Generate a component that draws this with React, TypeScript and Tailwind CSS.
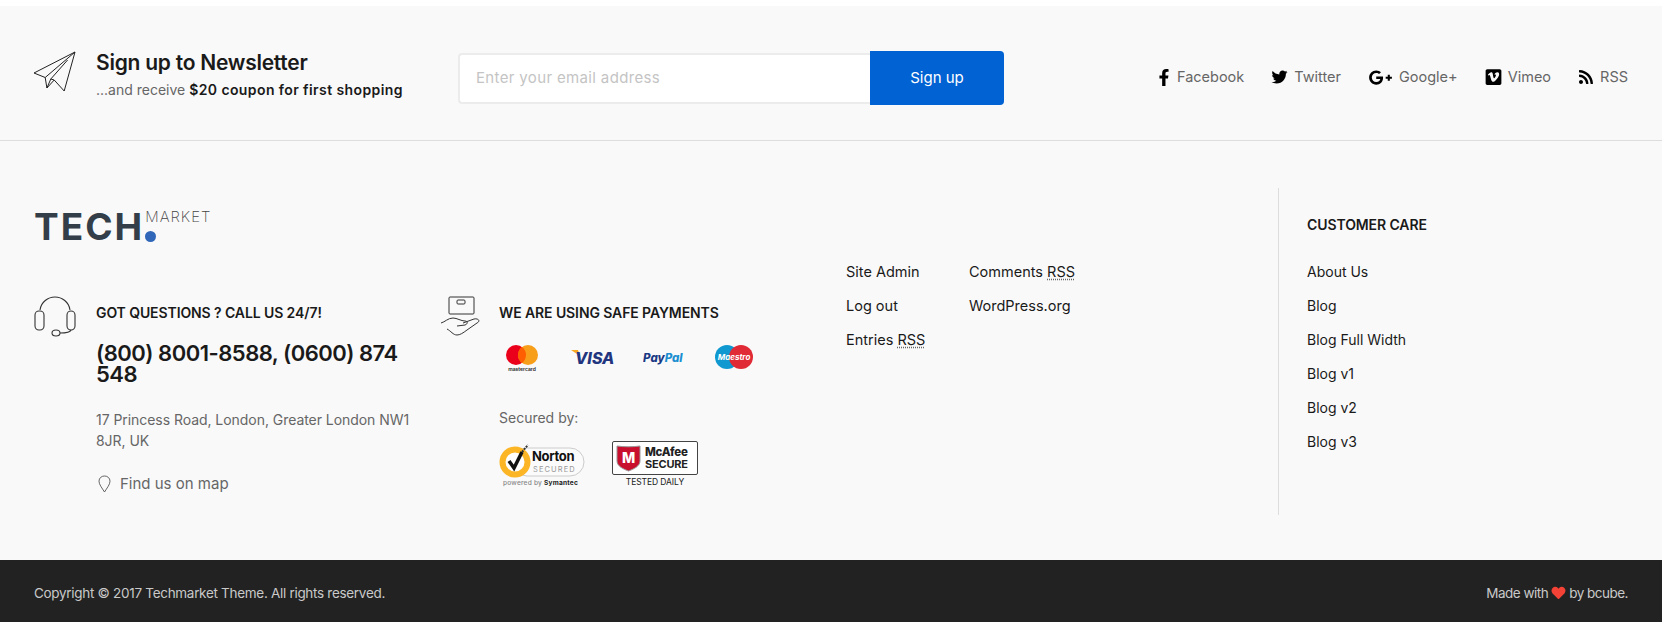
import { FaFacebookF, FaTwitter, FaGooglePlusG, FaVimeoSquare, FaRss, FaHeart } from "react-icons/fa";

const socials = [
  { icon: <FaFacebookF className="w-[14px] h-[17px]" />, label: "Facebook" },
  { icon: <FaTwitter className="w-[17px] h-[16px]" />, label: "Twitter" },
  { icon: <FaGooglePlusG className="w-[25px] h-[19px]" />, label: "Google+" },
  { icon: <FaVimeoSquare className="w-[17px] h-[18px]" />, label: "Vimeo" },
  { icon: <FaRss className="w-[16px] h-[16px]" />, label: "RSS" },
];

const careLinks = ["About Us", "Blog", "Blog Full Width", "Blog v1", "Blog v2", "Blog v3"];

function PlaneIcon() {
  return (
    <svg viewBox="33 51 43 42" className="w-[43px] h-[42px] shrink-0 -ml-[1px] -mt-[2px]" fill="none" stroke="#222" strokeWidth="1" strokeLinejoin="round">
      <path d="M75 52 34 73l11.200 4.500L46.900 88l7.300-8 10 11z" />
      <path d="M75 52 45.200 77.500M67.600 60 50.800 79l3.400 1M46.900 88l3.900-9" />
    </svg>
  );
}

function HeadsetIcon() {
  return (
    <svg viewBox="34 296 42 44" className="w-[42px] h-[44px] shrink-0" fill="none" stroke="#333" strokeWidth="1.100">
      <path d="M40 310c1-8 8-13 15-13s14 5 15 13" />
      <rect x="35" y="311" width="9" height="19" rx="4" />
      <rect x="67" y="311" width="8" height="19" rx="4" />
      <path d="M71 330c-1 3-6 3-11 3" />
      <ellipse cx="56" cy="333" rx="4" ry="3" />
    </svg>
  );
}

function HandBoxIcon() {
  return (
    <svg viewBox="440 296 41 41" className="w-[41px] h-[41px] shrink-0" fill="none" stroke="#333" strokeWidth="1">
      <rect x="449" y="297" width="25" height="17" rx="1" />
      <rect x="457" y="300" width="8" height="4" rx="1" />
      <path d="M441 323c4-1 7-5 12-5 4 0 8 3 12 3 3 0 3 3 0 4l-8 1" />
      <path d="M463 323l11-4c4-1 7 2 3 4l-10 7c-4 3-7 5-10 5-4 0-6-4-10-6" />
    </svg>
  );
}

function PinIcon() {
  return (
    <svg viewBox="0 0 13 18" className="w-[13px] h-[18px] shrink-0" fill="none" stroke="#555" strokeWidth="0.900">
      <path d="M6.500 17C4 13 1 9.500 1 6.200 1 3 3.500 1 6.500 1S12 3 12 6.200C12 9.500 9 13 6.500 17Z" />
    </svg>
  );
}

function Mastercard() {
  return (
    <svg viewBox="0 0 34 28" className="w-[34px] h-[28px]">
      <circle cx="11" cy="10" r="10" fill="#eb001b" />
      <circle cx="23" cy="10" r="10" fill="#f79e1b" />
      <path d="M17 2a10 10 0 0 1 0 16 10 10 0 0 1 0-16z" fill="#ff5f00" />
      <text x="17" y="26" textAnchor="middle" fontSize="5" fontWeight="600" fill="#222">mastercard</text>
    </svg>
  );
}

function Visa() {
  return (
    <svg viewBox="0 0 44 24" className="w-[44px] h-[24px]">
      <path d="M0 5h7l2 6z" fill="#f7a823" />
      <text x="4" y="19" fontSize="16" fontWeight="800" fontStyle="italic" fill="#22357f">VISA</text>
    </svg>
  );
}

function Paypal() {
  return (
    <svg viewBox="0 0 42 20" className="w-[42px] h-[20px]">
      <text x="0" y="15" fontSize="11.500" fontWeight="800" fontStyle="italic" fill="#1a3a85">Pay<tspan fill="#1b8fd0">Pal</tspan></text>
    </svg>
  );
}

function Maestro() {
  return (
    <svg viewBox="0 0 38 24" className="w-[38px] h-[24px]">
      <circle cx="12" cy="12" r="12" fill="#0f99d0" />
      <circle cx="26" cy="12" r="12" fill="#e02a35" />
      <text x="19" y="15" textAnchor="middle" fontSize="8" fontWeight="700" fontStyle="italic" fill="#fff">Maestro</text>
    </svg>
  );
}

function Norton() {
  return (
    <svg viewBox="0 0 87 46" className="w-[87px] h-[46px]">
      <rect x="14" y="7" width="71" height="28" rx="14" fill="#fbfbfb" stroke="#ccc" strokeWidth="1" />
      <circle cx="16" cy="21" r="15.500" fill="#fbb525" />
      <circle cx="16" cy="21" r="9.500" fill="#fff" />
      <path d="M10 20l5 7 8-16" fill="none" stroke="#111" strokeWidth="3.500" />
      <path d="M23 11l6-7" stroke="#333" strokeWidth="2" strokeDasharray="2 1" />
      <text x="33" y="20" fontSize="13" fontWeight="700" letterSpacing="-0.300" fill="#111">Norton</text>
      <text x="34" y="30.500" fontSize="7.500" letterSpacing="1.100" fill="#999">SECURED</text>
      <text x="4" y="44" fontSize="6.600" fontWeight="500" letterSpacing="0.200" fill="#888">powered by <tspan fill="#222" fontWeight="700">Symantec</tspan></text>
    </svg>
  );
}

function McAfee() {
  return (
    <svg viewBox="0 0 87 46" className="w-[87px] h-[46px]">
      <rect x="0.500" y="0.500" width="85" height="33" rx="1.500" fill="#fff" stroke="#444" />
      <path d="M5 5c7 1 16 1 23 0v15c0 5-6 8-11.500 10C11 28 5 25 5 20z" fill="#c8102e" stroke="#999" />
      <text x="16.500" y="22" textAnchor="middle" fontSize="14" fontWeight="800" fill="#fff">M</text>
      <text x="33" y="15" fontSize="11.500" fontWeight="800" letterSpacing="-0.300" fill="#222">McAfee</text>
      <text x="33" y="27" fontSize="11" fontWeight="700" letterSpacing="-0.200" fill="#222">SECURE</text>
      <text x="43" y="43.500" textAnchor="middle" fontSize="8.500" fontWeight="400" letterSpacing="-0.100" fill="#222">TESTED DAILY</text>
    </svg>
  );
}

function Rss() {
  return <abbr className="underline decoration-dotted decoration-[#666] underline-offset-2">RSS</abbr>;
}

export default function App() {
  return (
    <div className="w-[1662px] h-[622px] overflow-hidden bg-white pt-[6px] font-['Inter',sans-serif] text-[14px] text-[#1a1a1a]">
      <div className="bg-[#f9f9f9] h-[554px]">
        <div className="h-[135px] border-b border-[#dddddd] flex items-center px-[34px]">
          <div className="w-[424px] flex items-center gap-[20px] shrink-0">
            <PlaneIcon />
            <div className="pt-[4px]">
              <div className="text-[21px] leading-[24px] font-semibold tracking-[-0.25px]">Sign up to Newsletter</div>
              <div className="text-[#666] leading-[20px] mt-[5px]">
                ...and receive <b className="font-semibold text-[#1a1a1a] tracking-[0.4px]">$20 coupon for first shopping</b>
              </div>
            </div>
          </div>
          <div className="flex items-center w-[546px] shrink-0 pt-[10px]">
            <div className="w-[412px] h-[51px] bg-white border-2 border-[#ececec] border-r-0 rounded-l-[4px] pl-[16px] flex items-center text-[15px] tracking-[0.35px] text-[#c4c4c4]">
              Enter your email address
            </div>
            <div className="w-[134px] h-[54px] bg-[#0062d3] rounded-r-[4px] flex items-center justify-center text-[15px] text-white">
              Sign up
            </div>
          </div>
          <div className="ml-auto flex items-center gap-[27px] text-[14.500px] text-[#666] pt-[8px]">
            {socials.map((s) => (
              <div key={s.label} className="flex items-center gap-[6px]">
                <span className="text-black flex items-center">{s.icon}</span>
                <span>{s.label}</span>
              </div>
            ))}
          </div>
        </div>

        <div className="flex pl-[34px] pr-[34px] pt-[47px]">
          <div className="w-[1244px] shrink-0 pt-[24px]">
            <div className="flex items-start h-[30px]">
              <span className="text-[37px] leading-[30px] font-bold text-[#333e48] tracking-[2px]">TECH</span>
              <div className="relative ml-[1px] w-[66px] h-[30px]">
                <span className="absolute left-0 top-[-4px] text-[15px] leading-[18px] font-extralight text-[#444] tracking-[1px]">MARKET</span>
                <span className="absolute left-0 bottom-0 w-[11px] h-[11px] rounded-full bg-[#3067b8]" />
              </div>
            </div>

            <div className="flex mt-[54px]">
              <div className="w-[406px] shrink-0 flex gap-[20px]">
                <HeadsetIcon />
                <div className="w-[316px]">
                  <div className="font-semibold tracking-[-0.1px] leading-[20px] mt-[7px]">GOT QUESTIONS ? CALL US 24/7!</div>
                  <div className="text-[22px] leading-[21px] font-semibold tracking-[-0.5px] mt-[20px]">(800) 8001-8588, (0600) 874 548</div>
                  <div className="text-[#666] leading-[21px] tracking-[-0.05px] mt-[24px]">17 Princess Road, London, Greater London NW1 8JR, UK</div>
                  <div className="flex items-center gap-[9px] ml-[2px] text-[15px] text-[#666] mt-[22px]">
                    <PinIcon />
                    <span>Find us on map</span>
                  </div>
                </div>
              </div>

              <div className="w-[406px] shrink-0 flex gap-[18px]">
                <HandBoxIcon />
                <div>
                  <div className="font-semibold tracking-[-0.1px] leading-[20px] mt-[7px]">WE ARE USING SAFE PAYMENTS</div>
                  <div className="flex items-center mt-[20px] ml-[6px] h-[27px]">
                    <div className="mt-[4px]"><Mastercard /></div>
                    <div className="ml-[32px]"><Visa /></div>
                    <div className="ml-[28px]"><Paypal /></div>
                    <div className="ml-[30px]"><Maestro /></div>
                  </div>
                  <div className="text-[#666] leading-[20px] mt-[38px]">Secured by:</div>
                  <div className="flex gap-[26px] mt-[13px]">
                    <Norton />
                    <McAfee />
                  </div>
                </div>
              </div>

              <div className="flex -mt-[41px] leading-[34px] text-[14.500px]">
                <div className="flex flex-col w-[123px]">
                  <span>Site Admin</span>
                  <span>Log out</span>
                  <span>Entries <Rss /></span>
                </div>
                <div className="flex flex-col">
                  <span>Comments <Rss /></span>
                  <span>WordPress.org</span>
                </div>
              </div>
            </div>
          </div>

          <div className="h-[327px] flex-1 border-l border-[#dddddd] pl-[28px] pt-[27px]">
            <div className="font-semibold tracking-[-0.1px] leading-[20px]">CUSTOMER CARE</div>
            <div className="flex flex-col leading-[34px] mt-[20px]">
              {careLinks.map((l) => (
                <span key={l}>{l}</span>
              ))}
            </div>
          </div>
        </div>
      </div>

      <div className="h-[62px] bg-[#222222] flex items-center justify-between px-[34px] pt-[4px] text-[13.500px] text-[#c9c9c9] tracking-[-0.3px]">
        <span>Copyright © 2017 Techmarket Theme. All rights reserved.</span>
        <span className="flex items-center gap-[3px] tracking-[-0.5px]">
          Made with <FaHeart className="w-[15px] h-[14px] text-[#f44336]" /> by bcube.
        </span>
      </div>
    </div>
  );
}
